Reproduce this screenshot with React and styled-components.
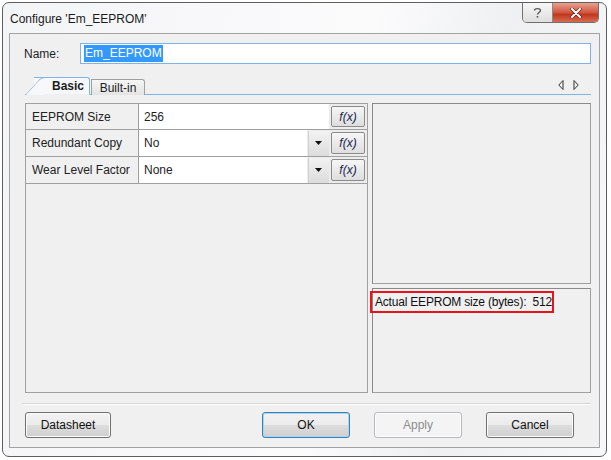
import React from 'react';
import styled, { createGlobalStyle } from 'styled-components';

const GlobalStyle = createGlobalStyle`
  html, body {
    margin: 0;
    padding: 0;
    background: #ffffff;
  }
  body {
    font-family: "Liberation Sans", Arial, sans-serif;
    font-size: 12px;
    color: #1e1e1e;
  }
`;

const Window = styled.div`
  margin: 2px 0 0 2px;
  width: 605px;
  height: 455px;
  box-sizing: border-box;
  border: 1px solid #5f5f5f;
  border-radius: 7px;
  background: linear-gradient(100deg, #f3f4f6 0%, #fbfbfc 55%, #eef0f2 75%, #f7f8f9 100%);
  display: flex;
  flex-direction: column;
`;

const TitleBar = styled.div`
  height: 30px;
  display: flex;
  justify-content: space-between;
  align-items: flex-start;
  padding-left: 7px;
`;

const Title = styled.div`
  margin-top: 9px;
  font-size: 12px;
  color: #1b1b1b;
`;

const Controls = styled.div`
  display: flex;
  margin-right: 7px;
  border: 1px solid #707070;
  border-top: none;
  border-radius: 0 0 5px 5px;
  overflow: hidden;
  height: 19px;
`;

const HelpButton = styled.div`
  width: 29px;
  display: flex;
  align-items: center;
  justify-content: center;
  background: linear-gradient(#f7f7f7, #dedede);
  border-right: 1px solid #8a8a8a;
`;

const CloseButton = styled.div`
  width: 45px;
  display: flex;
  align-items: center;
  justify-content: center;
  background: linear-gradient(#e8a190, #d2573f 50%, #c0391f 60%, #d66a4f);
`;

const Client = styled.div`
  margin: 0 6px 0 6px;
  height: 415px;
  box-sizing: border-box;
  border: 1px solid #a3a3a3;
  background: #f0f0f0;
  display: flex;
  flex-direction: column;
  padding: 0 8px 0 15px;
`;

const NameRow = styled.div`
  margin: 9px 0 0 -1px;
  height: 21px;
  display: flex;
  align-items: center;
`;

const NameLabel = styled.div`
  width: 56px;
`;

const NameInput = styled.div`
  flex: 1;
  height: 21px;
  box-sizing: border-box;
  border: 1px solid #7eb4ea;
  background: #fff;
  display: flex;
  align-items: center;
  padding-left: 3px;
`;

const Selected = styled.span`
  background: #3399ff;
  color: #fff;
  padding: 1px 1px 2px;
`;

const TabStrip = styled.div`
  margin-top: 11px;
  height: 20px;
  box-sizing: border-box;
  border-bottom: 1px solid #7eb4ea;
  display: flex;
  align-items: flex-end;
`;

const Tab = styled.div`
  position: relative;
  height: ${p => (p.$active ? 18 : 16)}px;
  box-sizing: border-box;
  margin-bottom: -1px;
  display: flex;
  align-items: center;
  justify-content: center;
  font-weight: ${p => (p.$active ? 'bold' : 'normal')};
  color: #1e1e1e;
  border: 1px solid ${p => (p.$active ? '#7eb4ea' : '#a0a0a0')};
  border-bottom: ${p => (p.$active ? '1px solid #f0f0f0' : 'none')};
  border-left: ${p => (p.$active ? 'none' : '1px solid #a0a0a0')};
  border-radius: 0 3px 0 0;
  background: ${p => (p.$active ? '#f6f8fb' : 'linear-gradient(#f5f5f5, #e4e4e4)')};
  width: ${p => p.$width}px;
  margin-left: ${p => p.$offset}px;
  padding-left: ${p => (p.$active ? 13 : 0)}px;
  z-index: ${p => (p.$active ? 2 : 1)};
  &::before {
    content: ${p => (p.$active ? '""' : 'none')};
    position: absolute;
    left: -9px;
    top: -1px;
    bottom: -1px;
    width: 18px;
    border-left: 1px solid #7eb4ea;
    border-top: 1px solid #7eb4ea;
    border-top-left-radius: 4px;
    background: #f6f8fb;
    transform: skewX(-42deg);
    transform-origin: bottom left;
    z-index: -1;
  }
`;

const TabArrows = styled.div`
  margin-left: auto;
  align-self: center;
  display: flex;
  gap: 9px;
  margin-right: 12px;
`;

const Content = styled.div`
  margin-top: 8px;
  height: 290px;
  display: flex;
  gap: 4px;
`;

const PropGrid = styled.div`
  width: 343px;
  box-sizing: border-box;
  border: 1px solid #a0a0a0;
  background: #f0f0f0;
`;

const PropRow = styled.div`
  display: grid;
  grid-template-columns: 113px 1fr;
  height: ${p => p.$height}px;
  box-sizing: border-box;
  border-bottom: 1px solid #a0a0a0;
`;

const PropLabel = styled.div`
  display: flex;
  align-items: center;
  padding-left: 6px;
  border-right: 1px solid #a0a0a0;
  background: #f0f0f0;
  color: #222;
`;

const PropValue = styled.div`
  display: flex;
  align-items: stretch;
  background: #ececec;
`;

const ValueText = styled.div`
  flex: 1;
  display: flex;
  align-items: center;
  padding-left: 5px;
  background: #fff;
`;

const ArrowButton = styled.div`
  width: 20px;
  margin: 1px 0 0 1px;
  display: flex;
  align-items: center;
  justify-content: center;
  background: linear-gradient(#f2f2f2, #dcdcdc);
  border-left: 1px solid #d0d0d0;
`;

const FxButton = styled.div`
  width: 34px;
  margin: 2px;
  box-sizing: border-box;
  border: 1px solid #8b8b8b;
  border-radius: 2px;
  background: linear-gradient(#f6f6f6, #dedede);
  display: flex;
  align-items: center;
  justify-content: center;
  font-style: italic;
  font-size: 12px;
  color: #1a2550;
`;

const SidePanels = styled.div`
  flex: 1;
  display: flex;
  flex-direction: column;
  gap: 4px;
`;

const Panel = styled.div`
  position: relative;
  box-sizing: border-box;
  border: 1px solid #a0a0a0;
  border-top-color: #8a8a8a;
  border-left-color: #8a8a8a;
  background: #f0f0f0;
  height: ${p => p.$height}px;
  flex: ${p => (p.$height ? 'none' : 1)};
`;

const Highlight = styled.div`
  position: absolute;
  left: -3px;
  top: 2px;
  width: 184px;
  height: 22px;
  box-sizing: border-box;
  border: 2px solid #e8141c;
  display: flex;
  align-items: center;
  padding-left: 3px;
  color: #111;
  white-space: pre;
  letter-spacing: -0.2px;
`;

const Separator = styled.div`
  margin: 10px 0 0 -3px;
  height: 0;
  border-top: 1px solid #d5d5d5;
  border-bottom: 1px solid #ffffff;
`;

const ButtonRow = styled.div`
  margin-top: 7px;
  display: flex;
  height: 26px;
`;

const Button = styled.div`
  box-sizing: border-box;
  border: 1px solid ${p => (p.$disabled ? '#b5b9bd' : p.$default ? '#3c7fb1' : '#707070')};
  border-radius: 3px;
  background: ${p => (p.$disabled ? '#f4f4f4' : 'linear-gradient(#f2f2f2 0%, #ebebeb 50%, #dddddd 51%, #cfcfcf 100%)')};
  box-shadow: ${p => (p.$default ? 'inset 0 0 0 1px #a6d6f2' : 'inset 0 0 0 1px #fcfcfc')};
  color: ${p => (p.$disabled ? '#8d8d8d' : '#111')};
  display: flex;
  align-items: center;
  justify-content: center;
  margin-left: ${p => p.$gap || 0}px;
  width: ${p => p.$width || 88}px;
`;

const rows = [
  { label: 'EEPROM Size', value: '256', dropdown: false, height: 26 },
  { label: 'Redundant Copy', value: 'No', dropdown: true, height: 27 },
  { label: 'Wear Level Factor', value: 'None', dropdown: true, height: 27 },
];

function DropArrow() {
  return (
    <svg width="8" height="5" viewBox="0 0 8 5">
      <path d="M0 0 H7 L3.5 4 Z" fill="#111" />
    </svg>
  );
}

export default function App() {
  return (
    <>
      <GlobalStyle />
      <Window>
        <TitleBar>
          <Title>Configure 'Em_EEPROM'</Title>
          <Controls>
            <HelpButton>
              <svg width="9" height="12" viewBox="0 0 9 12">
                <path d="M1.5 3.5 C1.5 1 7.5 1 7.5 3.5 C7.5 5.5 4.5 5.5 4.5 7.5" fill="none" stroke="#555" strokeWidth="1.4" />
                <rect x="3.7" y="9" width="1.6" height="1.6" fill="#555" />
              </svg>
            </HelpButton>
            <CloseButton>
              <svg width="12" height="10" viewBox="0 0 12 10">
                <path d="M2 1 L10 9 M10 1 L2 9" stroke="#5a1a10" strokeWidth="3.2" strokeLinecap="round" />
                <path d="M2 1 L10 9 M10 1 L2 9" stroke="#ffffff" strokeWidth="2" strokeLinecap="round" />
              </svg>
            </CloseButton>
          </Controls>
        </TitleBar>
        <Client>
          <NameRow>
            <NameLabel>Name:</NameLabel>
            <NameInput>
              <Selected>Em_EEPROM</Selected>
            </NameInput>
          </NameRow>
          <TabStrip>
            <Tab $active $width={56} $offset={9}>Basic</Tab>
            <Tab $width={54} $offset={1}>Built-in</Tab>
            <TabArrows>
              <svg width="6" height="10" viewBox="0 0 6 10">
                <path d="M5 0.5 L0.8 5 L5 9.5 Z" fill="none" stroke="#333" strokeWidth="1" />
              </svg>
              <svg width="6" height="10" viewBox="0 0 6 10">
                <path d="M1 0.5 L5.2 5 L1 9.5 Z" fill="none" stroke="#333" strokeWidth="1" />
              </svg>
            </TabArrows>
          </TabStrip>
          <Content>
            <PropGrid>
              {rows.map(row => (
                <PropRow key={row.label} $height={row.height}>
                  <PropLabel>{row.label}</PropLabel>
                  <PropValue>
                    <ValueText>{row.value}</ValueText>
                    {row.dropdown && (
                      <ArrowButton>
                        <DropArrow />
                      </ArrowButton>
                    )}
                    <FxButton>f(x)</FxButton>
                  </PropValue>
                </PropRow>
              ))}
            </PropGrid>
            <SidePanels>
              <Panel $height={181} />
              <Panel>
                <Highlight>Actual EEPROM size (bytes):  512</Highlight>
              </Panel>
            </SidePanels>
          </Content>
          <Separator />
          <ButtonRow>
            <Button $width={86}>Datasheet</Button>
            <Button $default $gap={151}>OK</Button>
            <Button $disabled $gap={24}>Apply</Button>
            <Button $gap={24}>Cancel</Button>
          </ButtonRow>
        </Client>
      </Window>
    </>
  );
}
